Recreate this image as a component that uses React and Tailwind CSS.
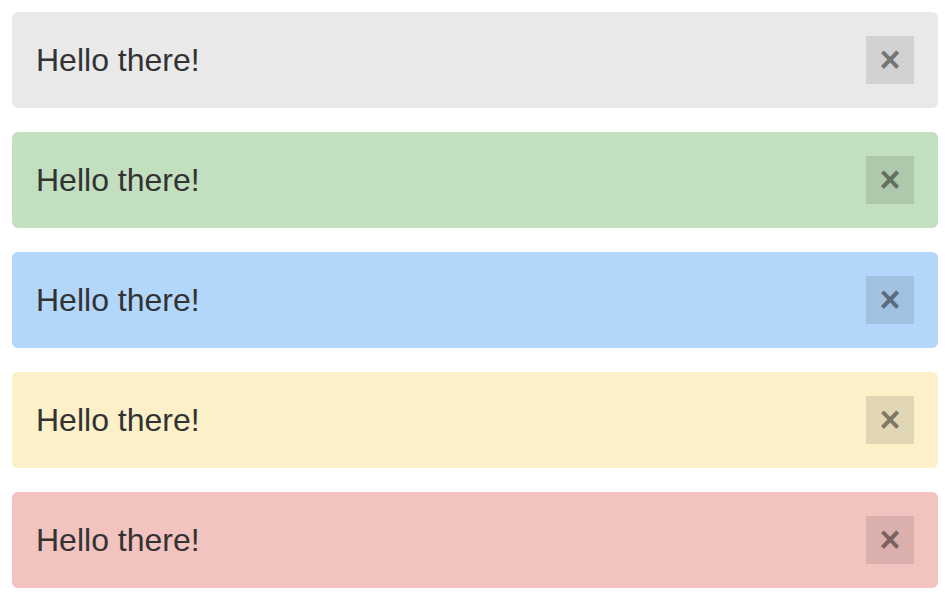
import { useState } from "react";

const alerts = [
  { id: 1, bg: "bg-[#e9e9e9]" },
  { id: 2, bg: "bg-[#c2dfbf]" },
  { id: 3, bg: "bg-[#b3d7fa]" },
  { id: 4, bg: "bg-[#fcf0c9]" },
  { id: 5, bg: "bg-[#f3c3c0]" },
];

export default function App() {
  const [hidden, setHidden] = useState([]);

  return (
    <div className="min-h-screen bg-white pt-3 pl-3 pr-[14px] flex flex-col gap-6 font-['Liberation_Sans',Arial,sans-serif]">
      {alerts
        .filter((a) => !hidden.includes(a.id))
        .map((a) => (
          <div
            key={a.id}
            className={`${a.bg} h-24 rounded-md flex items-center justify-between pl-6 pr-6`}
          >
            <span className="text-[32px] leading-none text-[#333333]">
              Hello there!
            </span>
            <button
              onClick={() => setHidden([...hidden, a.id])}
              className="w-12 h-12 bg-black/10 flex items-center justify-center text-black/45 text-[36px] font-bold leading-none"
            >
              ×
            </button>
          </div>
        ))}
    </div>
  );
}
